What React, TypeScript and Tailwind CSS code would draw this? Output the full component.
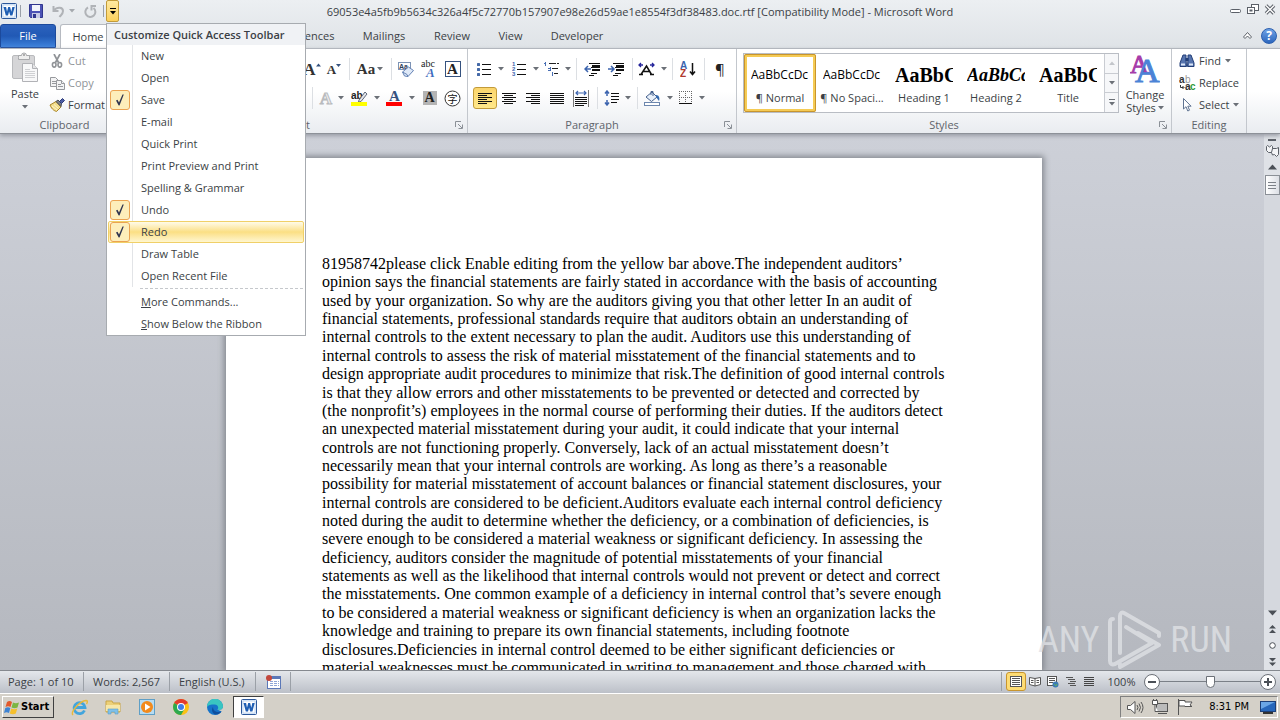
import type { ReactNode } from 'react';
import clsx from 'clsx';

type MenuEntry = {
  label: string;
  checked?: boolean;
  active?: boolean;
};

const menuEntries: MenuEntry[] = [
  { label: 'New' },
  { label: 'Open' },
  { label: 'Save', checked: true },
  { label: 'E-mail' },
  { label: 'Quick Print' },
  { label: 'Print Preview and Print' },
  { label: 'Spelling & Grammar' },
  { label: 'Undo', checked: true },
  { label: 'Redo', checked: true, active: true },
  { label: 'Draw Table' },
  { label: 'Open Recent File' },
];

const tabs = [
  { label: 'References', width: 'ml-[148px] w-[84px]' },
  { label: 'Mailings', width: 'w-[72px]' },
  { label: 'Review', width: 'w-[64px]' },
  { label: 'View', width: 'w-[53px]' },
  { label: 'Developer', width: 'w-[80px]' },
];

const styleCards = [
  { name: '¶ Normal', sample: 'AaBbCcDc', sampleClass: 'text-[12px]', selected: true },
  { name: '¶ No Spaci...', sample: 'AaBbCcDc', sampleClass: 'text-[12px]' },
  { name: 'Heading 1', sample: 'AaBbC', sampleClass: 'font-["Liberation_Serif",serif] text-[20px] font-bold' },
  { name: 'Heading 2', sample: 'AaBbCc', sampleClass: 'font-["Liberation_Serif",serif] text-[18px] font-bold italic' },
  { name: 'Title', sample: 'AaBbC', sampleClass: 'font-["Liberation_Serif",serif] text-[20px] font-bold' },
];

const bodyLines = [
  '81958742please click Enable editing from the yellow bar above.The independent auditors’',
  'opinion says the financial statements are fairly stated in accordance with the basis of accounting',
  'used by your organization. So why are the auditors giving you that other letter In an audit of',
  'financial statements, professional standards require that auditors obtain an understanding of',
  'internal controls to the extent necessary to plan the audit. Auditors use this understanding of',
  'internal controls to assess the risk of material misstatement of the financial statements and to',
  'design appropriate audit procedures to minimize that risk.The definition of good internal controls',
  'is that they allow errors and other misstatements to be prevented or detected and corrected by',
  '(the nonprofit’s) employees in the normal course of performing their duties. If the auditors detect',
  'an unexpected material misstatement during your audit, it could indicate that your internal',
  'controls are not functioning properly. Conversely, lack of an actual misstatement doesn’t',
  'necessarily mean that your internal controls are working. As long as there’s a reasonable',
  'possibility for material misstatement of account balances or financial statement disclosures, your',
  'internal controls are considered to be deficient.Auditors evaluate each internal control deficiency',
  'noted during the audit to determine whether the deficiency, or a combination of deficiencies, is',
  'severe enough to be considered a material weakness or significant deficiency. In assessing the',
  'deficiency, auditors consider the magnitude of potential misstatements of your financial',
  'statements as well as the likelihood that internal controls would not prevent or detect and correct',
  'the misstatements. One common example of a deficiency in internal control that’s severe enough',
  'to be considered a material weakness or significant deficiency is when an organization lacks the',
  'knowledge and training to prepare its own financial statements, including footnote',
  'disclosures.Deficiencies in internal control deemed to be either significant deficiencies or',
  'material weaknesses must be communicated in writing to management and those charged with',
];

function Caret({ className = 'text-[#6b7077]' }: { className?: string }) {
  return (
    <svg width="6" height="4" viewBox="0 0 6 4" className={clsx('shrink-0', className)} aria-hidden="true">
      <path d="M0 0h6L3 3.5z" fill="currentColor" />
    </svg>
  );
}

function Sep() {
  return (
    <span className="flex w-2 shrink-0 justify-center">
      <span className="h-[22px] w-px bg-[#dcdfe3]" />
    </span>
  );
}

type ToolProps = {
  label: string;
  width: string;
  children: ReactNode;
  caret?: boolean;
  selected?: boolean;
};

function Tool({ label, width, children, caret, selected }: ToolProps) {
  return (
    <button
      type="button"
      aria-label={label}
      className={clsx(
        'flex h-[22px] shrink-0 items-center justify-center gap-[6px] rounded-[3px] border',
        width,
        selected ? 'border-[#c29b3a] bg-gradient-to-b from-[#fbd56c] to-[#ffe88b]' : 'border-transparent',
      )}
    >
      {children}
      {caret && <Caret />}
    </button>
  );
}

function Lines({ rows }: { rows: [number, number][] }) {
  return (
    <svg width="14" height="12" viewBox="0 0 14 12" shapeRendering="crispEdges" aria-hidden="true">
      {rows.map(([x, w], i) => (
        <rect key={i} x={x} y={i * 2 + 1} width={w} height="1" fill="#111" />
      ))}
    </svg>
  );
}

function WordIcon({ size }: { size: number }) {
  return (
    <svg width={size} height={size} viewBox="0 0 16 16" className="shrink-0" aria-hidden="true">
      <rect x=".5" y=".5" width="15" height="15" rx="1" fill="#e8f1fb" stroke="#2b579a" />
      <rect x="2" y="2" width="12" height="12" fill="#fff" stroke="#9dbfe8" strokeWidth=".6" />
      <path d="M2.500 4h2.600l.900 4.800L7.200 4h1.900l1.200 4.800L11.300 4h2.400l-2.300 8.500H9.200L8.100 8.400 7 12.500H4.800z" fill="#1f5fb4" />
    </svg>
  );
}

function PasteIcon() {
  return (
    <svg width="27" height="31" viewBox="0 0 27 31" aria-hidden="true">
      <rect x=".5" y="3.5" width="22" height="23" rx="1.5" fill="#d5d5d7" stroke="#b9babd" />
      <path d="M6.500 5.500V3.500h3a2.500 2.500 0 0 1 5 0h3v4h-11z" fill="#eee" stroke="#a7a8ab" />
      <circle cx="12" cy="3" r="1" fill="#999" />
      <path d="M10.500 11.500h10l5 5v13h-15z" fill="#f8f8f9" stroke="#b1b2b6" />
      <path d="M20.500 11.500v5h5" fill="#e4e4e6" stroke="#b1b2b6" />
      <path d="M13 17.500h5M13 19.500h10M13 21.500h10M13 23.500h10M13 25.500h10" stroke="#cfd0d3" />
    </svg>
  );
}

function CutIcon() {
  return (
    <svg width="16" height="14" viewBox="0 0 16 14" fill="none" stroke="#909397" aria-hidden="true">
      <path d="M5 0l4.500 8.500M11 0L6.500 8.500" strokeWidth="1.700" />
      <ellipse cx="5.200" cy="10.800" rx="1.800" ry="2.300" strokeWidth="1.600" />
      <ellipse cx="10.800" cy="10.800" rx="1.800" ry="2.300" strokeWidth="1.600" />
    </svg>
  );
}

function CopyIcon() {
  return (
    <svg width="16" height="14" viewBox="0 0 16 14" fill="#f3f3f4" stroke="#97999d" aria-hidden="true">
      <path d="M1.500 1.500h5l3 3v6h-8z" />
      <path d="M3 5.500h4M3 7.500h4" />
      <path d="M7.500 4.500h5l3 3v6h-8z" />
      <path d="M12.500 4.500v3h3M9 8.500h3M9 10.500h5" />
    </svg>
  );
}

function PainterIcon() {
  return (
    <svg width="16" height="14" viewBox="0 0 16 14" aria-hidden="true">
      <path d="M1 7l6-3.500L12 9l-4.500 4.500C6 13 3 12 1 7z" fill="#f1dc8a" stroke="#a98428" />
      <path d="M3 8l5 4M5 6.500l4.500 4" stroke="#fff6cf" />
      <path d="M7 3.500l2-1.500 3.500 3.500L12 8.500z" fill="#7e8086" stroke="#4c4f56" />
      <path d="M10.500 3.500L13.500.500l2 2-3 3z" fill="#4d5da4" stroke="#2c3a78" />
    </svg>
  );
}

function SerifA({ className, children = 'A' }: { className: string; children?: ReactNode }) {
  return <span className={clsx('font-["Liberation_Serif",serif] leading-none font-bold', className)}>{children}</span>;
}

function GrowIcon({ down }: { down?: boolean }) {
  return (
    <span className="flex items-center">
      <SerifA className={down ? 'text-[13px] text-[#333]' : 'text-[17px] text-[#333]'} />
      <svg width="5" height="12" viewBox="0 0 5 12" aria-hidden="true">
        <path d={down ? 'M0 1h5L2.500 4z' : 'M0 3.500h5L2.500.500z'} fill="#35527f" />
      </svg>
    </span>
  );
}

function EraserIcon() {
  return (
    <svg width="17" height="17" viewBox="0 0 17 17" aria-hidden="true">
      <rect x=".5" y="1.500" width="12" height="7" fill="#fff" stroke="#7d93b5" />
      <text x="1" y="8" fontSize="7" fontWeight="bold" fontFamily="Liberation Sans, sans-serif" fill="#30405c">Aa</text>
      <path d="M4.500 11l6-5 5 3.500-5.500 6-3.500-.500z" fill="#dfe9f7" stroke="#6583b5" />
      <path d="M4.500 11l4.500 2.500 1 2" fill="none" stroke="#6583b5" />
    </svg>
  );
}

function PhoneticIcon() {
  return (
    <svg width="17" height="18" viewBox="0 0 17 18" aria-hidden="true">
      <text x="0" y="7" fontSize="10" fontFamily="Liberation Serif, serif" fill="#222">abc</text>
      <text x="5" y="17" fontSize="13" fontWeight="bold" fontStyle="italic" fontFamily="Liberation Serif, serif" fill="#3f6dc0">A</text>
    </svg>
  );
}

function HighlightIcon() {
  return (
    <svg width="17" height="17" viewBox="0 0 17 17" aria-hidden="true">
      <text x="0" y="9" fontSize="10" fontWeight="bold" fontFamily="Liberation Sans, sans-serif" fill="#222">ab</text>
      <path d="M8 10l6-8 2 2-6 7.500-2.500.500z" fill="#e3e6ec" stroke="#5f6878" />
      <rect x="0" y="12" width="16" height="4" fill="#ff0" />
    </svg>
  );
}

function FontColorIcon() {
  return (
    <svg width="17" height="17" viewBox="0 0 17 17" aria-hidden="true">
      <text x="3" y="11" fontSize="15" fontWeight="bold" fontFamily="Liberation Serif, serif" fill="#35527f">A</text>
      <rect x="0" y="12" width="16" height="4" fill="#f00" />
    </svg>
  );
}

function CircledIcon() {
  return (
    <svg width="17" height="17" viewBox="0 0 17 17" aria-hidden="true">
      <circle cx="8.500" cy="8.500" r="7.500" fill="#fff" stroke="#333" />
      <text x="3.500" y="12.500" fontSize="10" fontFamily="Noto Sans CJK SC, sans-serif" fill="#111">字</text>
    </svg>
  );
}

function ListIcon({ kind }: { kind: 'bullet' | 'number' }) {
  return (
    <svg width="15" height="14" viewBox="0 0 15 14" aria-hidden="true">
      {[2, 7, 12].map((y, i) => (
        <g key={y}>
          {kind === 'bullet' ? (
            <rect x="0" y={y - 1} width="3" height="3" rx=".5" fill="#456aa8" />
          ) : (
            <text x="0" y={y + 2} fontSize="6" fontWeight="bold" fontFamily="Liberation Sans, sans-serif" fill="#3c64ae">
              {i + 1}
            </text>
          )}
          <rect x="5" y={y} width="9" height="1" fill="#111" shapeRendering="crispEdges" />
        </g>
      ))}
    </svg>
  );
}

function MultilevelIcon() {
  return (
    <svg width="16" height="15" viewBox="0 0 16 15" shapeRendering="crispEdges" aria-hidden="true">
      <path d="M5 1.500h11M8 6.500h7M11 11.500h4" stroke="#111" strokeDasharray="8 1" />
      <path d="M1.500 0v4M.500 1h1M4 6.500h3M6.500 5v4M4 8.500h3M9.500 10v4" stroke="#3c64ae" />
    </svg>
  );
}

function IndentIcon({ out }: { out?: boolean }) {
  return (
    <svg width="16" height="13" viewBox="0 0 16 13" aria-hidden="true">
      <path d="M5 .500h11M7 4.500h9M7 10.500h6M5 12.500h5" stroke="#111" shapeRendering="crispEdges" />
      <path d="M8 2h8v2H8zM8 6h8v2H8z" fill="#111" />
      <path d={out ? 'M4 3L1 6l3 3M1 6h6' : 'M3 3l3 3-3 3M0 6h6'} fill="none" stroke="#3c64ae" strokeWidth="1.500" />
    </svg>
  );
}

function AsianLayoutIcon() {
  return (
    <svg width="17" height="14" viewBox="0 0 17 14" fill="none" aria-hidden="true">
      <path d="M1 12.500h4M12 12.500h4M3 12.500L8.500 4l5 8.500M5.500 9.500h6" stroke="#111" strokeWidth="1.500" />
      <path d="M5 3H1M3 1L1 3l2 2M12 3h4M14 1l2 2-2 2" stroke="#24249b" strokeWidth="1.300" />
    </svg>
  );
}

function SortIcon() {
  return (
    <svg width="16" height="17" viewBox="0 0 16 17" aria-hidden="true">
      <text x="0" y="8" fontSize="10" fontWeight="bold" fontFamily="Liberation Sans, sans-serif" fill="#3c64ae">A</text>
      <text x="0" y="16" fontSize="10" fontWeight="bold" fontFamily="Liberation Sans, sans-serif" fill="#b0392e">Z</text>
      <path d="M12.500 2v11M10 10.500l2.500 3 2.500-3" fill="none" stroke="#111" strokeWidth="1.500" />
    </svg>
  );
}

function DistributeIcon() {
  return (
    <svg width="16" height="17" viewBox="0 0 16 17" aria-hidden="true">
      <path d="M.500 0v17M15.500 0v17" stroke="#777" />
      <path d="M3 3h10M5 1L3 3l2 2M11 1l2 2-2 2" stroke="#3c64ae" fill="none" strokeWidth="1.200" />
      <path d="M2 7.500h12M2 9.500h12M2 11.500h12M2 13.500h12M2 15.500h9" stroke="#111" shapeRendering="crispEdges" />
    </svg>
  );
}

function SpacingIcon() {
  return (
    <svg width="15" height="16" viewBox="0 0 15 16" aria-hidden="true">
      <path d="M3 1v5M1 3.500L3 1l2 2.500M3 15v-5M1 12.500L3 15l2-2.500" fill="none" stroke="#3c64ae" strokeWidth="1.500" />
      <path d="M7 3.500h8M7 6.500h8M7 9.500h8M7 12.500h6" stroke="#111" shapeRendering="crispEdges" />
    </svg>
  );
}

function FillIcon() {
  return (
    <svg width="17" height="16" viewBox="0 0 17 16" aria-hidden="true">
      <path d="M2 7l6-5 5 5-5.500 4.500z" fill="#e8f0fa" stroke="#45608d" />
      <path d="M7 5V1.500h2V6" fill="none" stroke="#45608d" />
      <path d="M12 5c3 0 4 3 3 6-1-1-2-3-3-4z" fill="#3268ae" />
      <rect x=".5" y="12.500" width="15" height="3" fill="#fff" stroke="#6d87ae" />
    </svg>
  );
}

function BordersIcon() {
  return (
    <svg width="14" height="14" viewBox="0 0 14 14" shapeRendering="crispEdges" aria-hidden="true">
      <path d="M.500 0v13M6.500 0v13M12.500 0v13M0 .500h13M0 6.500h13" stroke="#666" strokeDasharray="1 1" />
      <path d="M0 12.500h13" stroke="#111" />
    </svg>
  );
}

function BinocularsIcon() {
  return (
    <svg width="16" height="14" viewBox="0 0 16 14" aria-hidden="true">
      <path d="M4 1h3v4l.500 7.500h-6.500V9zM12 1H9v4l-.500 7.500H15V9z" fill="#5674ae" stroke="#233f78" />
      <rect x="6.500" y="4" width="3" height="3" fill="#233f78" />
      <path d="M2 10.500h4M10 10.500h4" stroke="#dbe6f7" strokeWidth="2" />
    </svg>
  );
}

function ReplaceIcon() {
  return (
    <svg width="17" height="16" viewBox="0 0 17 16" aria-hidden="true">
      <text x="0" y="8" fontSize="10" fontWeight="bold" fontFamily="Liberation Sans, sans-serif" fill="#333">a</text>
      <text x="6" y="8" fontSize="10" fontFamily="Liberation Sans, sans-serif" fill="#999">b</text>
      <path d="M1.500 10v2.500h3M3.500 11l1.500 1.500L3.500 14" fill="none" stroke="#333" />
      <text x="6" y="15" fontSize="10" fontWeight="bold" fontFamily="Liberation Sans, sans-serif" fill="#333">a</text>
      <text x="11" y="15" fontSize="10" fontWeight="bold" fontFamily="Liberation Sans, sans-serif" fill="#2f9a3a">c</text>
    </svg>
  );
}

function PointerIcon() {
  return (
    <svg width="16" height="14" viewBox="0 0 16 14" aria-hidden="true">
      <path d="M4.500.500v10.500l2.500-2.300 1.800 4.300 1.700-.800-1.700-4h3.300z" fill="#fff" stroke="#5f7391" />
    </svg>
  );
}

function ChangeStylesIcon() {
  return (
    <svg width="30" height="30" viewBox="0 0 30 30" aria-hidden="true">
      <text x="0" y="20" fontSize="26" fontFamily="Liberation Serif, serif" fill="#a73ca9" stroke="#a73ca9">A</text>
      <text x="5" y="29" fontSize="34" fontFamily="Liberation Serif, serif" fill="#4b83d6" stroke="#4b83d6">A</text>
    </svg>
  );
}

function Launcher() {
  return (
    <svg width="8" height="8" viewBox="0 0 8 8" fill="none" stroke="#8b9097" aria-hidden="true">
      <path d="M.500 6V.500H6M3 3l4 4M7.500 3.500v4h-4" />
    </svg>
  );
}

function Group({ title, width, launcher, children }: { title: string; width: string; launcher?: boolean; children: ReactNode }) {
  return (
    <section className={clsx('flex shrink-0 flex-col border-r border-[#c3c7cd]', width)}>
      <div className="min-h-0 flex-1">{children}</div>
      <div className="flex h-4 shrink-0 items-center text-[#5f646b]">
        <span className="flex-1 text-center">{title}</span>
        {launcher && (
          <button type="button" aria-label={`${title} settings`} className="mr-1 ml-2">
            <Launcher />
          </button>
        )}
      </div>
    </section>
  );
}

function TitleBar() {
  return (
    <header className="flex h-6 items-center">
      <div className="flex w-[125px] items-center self-start pl-px">
        <WordIcon size={16} />
        <span className="mr-px ml-[3px] h-3 w-px bg-[#9aa0a8]" />
        <button type="button" aria-label="Save" className="flex h-[22px] w-[28px] items-center justify-center">
          <svg width="14" height="14" viewBox="0 0 14 14" aria-hidden="true">
            <path d="M.500.500h13v13h-12l-1-1z" fill="#4b52b5" stroke="#30368e" />
            <rect x="3" y="1" width="8" height="6" fill="#f2f4fb" />
            <rect x="3" y="9" width="8" height="5" fill="#c6cae6" />
            <rect x="4" y="10" width="3" height="4" fill="#30368e" />
          </svg>
        </button>
        <button type="button" aria-label="Undo" className="flex h-[22px] w-[30px] items-center gap-1 pl-[2px]">
          <svg width="13" height="13" viewBox="0 0 13 13" fill="none" stroke="#b0b3b7" strokeWidth="2" aria-hidden="true">
            <path d="M1.500 1v5h5M2 5.500C5 1.500 11 2 11 6c0 3-2 4-3.500 6" />
          </svg>
          <Caret className="text-[#a5a9ae]" />
        </button>
        <button type="button" aria-label="Redo" className="flex h-[22px] w-[21px] items-center justify-center">
          <svg width="13" height="13" viewBox="0 0 13 13" fill="none" stroke="#b0b3b7" strokeWidth="2" aria-hidden="true">
            <path d="M4 2.500a5 5 0 1 0 5.500.500M12 1H7.500v4.500" />
          </svg>
        </button>
        <span className="mx-[2px] h-3 w-px bg-[#9aa0a8]" />
        <button
          type="button"
          aria-label="Customize Quick Access Toolbar"
          aria-expanded="true"
          className="flex h-[22px] w-[13px] flex-col items-center justify-center gap-[2px] rounded-[2px] border border-[#c29b3a] bg-gradient-to-b from-[#ffe9a0] to-[#fcd15b]"
        >
          <span className="h-px w-[6px] bg-black" />
          <Caret className="text-black" />
        </button>
      </div>
      <h1 className="flex-1 text-center text-[11px] text-[#3b3f45]">
        69053e4a5fb9b5634c326a4f5c72770b157907e98e26d59ae1e8554f3df38483.doc.rtf [Compatibility Mode] - Microsoft Word
      </h1>
      <div className="flex w-[125px] items-center justify-end gap-[5px] self-start pt-[3px] pr-1">
        <button type="button" aria-label="Minimize">
          <svg width="12" height="13" viewBox="0 0 12 13" aria-hidden="true">
            <rect x=".5" y="6.500" width="10" height="3" rx="1" fill="#fff" stroke="#5b6068" />
          </svg>
        </button>
        <button type="button" aria-label="Restore">
          <svg width="12" height="13" viewBox="0 0 12 13" fill="#fff" stroke="#5b6068" aria-hidden="true">
            <rect x="4.500" y="1.500" width="7" height="6" />
            <rect x=".5" y="4.500" width="7" height="6" />
            <rect x="3" y="7" width="2" height="1" />
          </svg>
        </button>
        <button type="button" aria-label="Close">
          <svg width="12" height="13" viewBox="0 0 12 13" aria-hidden="true">
            <path d="M2 2.500l8 8M10 2.500l-8 8" stroke="#5b6068" strokeWidth="3.500" />
            <path d="M2 2.500l8 8M10 2.500l-8 8" stroke="#fff" strokeWidth="1.500" />
          </svg>
        </button>
      </div>
    </header>
  );
}

function TabRow() {
  return (
    <nav className="flex h-6 items-stretch text-[#3b3f45]">
      <button
        type="button"
        className="w-[56px] rounded-t-[3px] border border-[#1c4a9c] bg-gradient-to-b from-[#2c62bd] via-[#2159b5] to-[#3f83dc] text-white"
      >
        File
      </button>
      <button type="button" className="ml-1 w-[56px] rounded-t-[3px] border border-b-0 border-[#b6bac1] bg-white">
        Home
      </button>
      {tabs.map((tab) => (
        <button key={tab.label} type="button" className={clsx('shrink-0', tab.width)}>
          {tab.label}
        </button>
      ))}
      <div className="ml-auto flex items-center gap-[9px] pr-[3px]">
        <button type="button" aria-label="Minimize the Ribbon">
          <svg width="9" height="8" viewBox="0 0 9 8" fill="#fff" stroke="#5b6068" aria-hidden="true">
            <path d="M.500 5l4-4.500 4 4.500-1.500 1.500-2.500-2.500L2 6.500z" />
          </svg>
        </button>
        <button
          type="button"
          aria-label="Help"
          className="h-4 w-4 rounded-full border border-[#2c5fae] bg-gradient-to-b from-[#6fa3e6] to-[#2c66bd] text-[12px] leading-none font-bold text-white"
        >
          ?
        </button>
      </div>
    </nav>
  );
}

function Ribbon() {
  return (
    <div className="z-10 flex h-[86px] border-t border-b border-[#b2b6bd] border-b-[#8d9198] bg-gradient-to-b from-white via-white to-[#e9ecf0] shadow-[0_2px_4px_#9a9ea6]">
      <Group title="Clipboard" width="w-[150px]" launcher>
        <div className="flex pt-[3px] pl-[6px]">
          <button type="button" className="flex w-[38px] flex-col items-center">
            <PasteIcon />
            <span className="leading-[22px] text-[#3b3f45]">Paste</span>
            <Caret />
          </button>
          <ul className="ml-[5px] whitespace-nowrap text-[#909498]">
            <li>
              <button type="button" className="flex h-[22px] items-center gap-[3px] pb-1">
                <CutIcon /> Cut
              </button>
            </li>
            <li>
              <button type="button" className="flex h-[22px] items-center gap-[3px] pb-1">
                <CopyIcon /> Copy
              </button>
            </li>
            <li>
              <button type="button" aria-label="Format Painter" className="flex h-[22px] items-center gap-[3px] pb-1 text-[#3b3f45]">
                <PainterIcon /> Format
              </button>
            </li>
          </ul>
        </div>
      </Group>

      <Group title="Font" width="w-[318px]" launcher>
        <div className="flex flex-col items-end gap-[7px] pt-[9px] pr-[3px]">
          <div className="flex items-center">
            <Tool label="Grow Font" width="w-[22px]"><GrowIcon /></Tool>
            <Tool label="Shrink Font" width="w-[22px]"><GrowIcon down /></Tool>
            <Sep />
            <Tool label="Change Case" width="w-[34px]" caret>
              <SerifA className="-mr-1 text-[15px] text-[#333]">Aa</SerifA>
            </Tool>
            <Sep />
            <Tool label="Clear Formatting" width="w-[23px]"><EraserIcon /></Tool>
            <Tool label="Phonetic Guide" width="w-[23px]"><PhoneticIcon /></Tool>
            <Tool label="Character Border" width="w-[23px]">
              <SerifA className="h-4 w-4 border border-[#35527f] text-[15px] text-[#222]" />
            </Tool>
          </div>
          <div className="flex items-center">
            <Sep />
            <Tool label="Text Effects" width="w-[32px]" caret>
              <SerifA className="text-[17px] text-[#eceded] [-webkit-text-stroke:1px_#b9bbbe]" />
            </Tool>
            <Tool label="Highlight" width="w-[35px]" caret><HighlightIcon /></Tool>
            <Tool label="Font Color" width="w-[35px]" caret><FontColorIcon /></Tool>
            <Tool label="Character Shading" width="w-[23px]">
              <SerifA className="h-[14px] w-[14px] bg-[#b4b4b4] text-[14px] text-[#222]" />
            </Tool>
            <Tool label="Enclose Characters" width="w-[23px]"><CircledIcon /></Tool>
          </div>
        </div>
      </Group>

      <Group title="Paragraph" width="w-[269px]" launcher>
        <div className="flex flex-col gap-[7px] pt-[9px] pl-[5px]">
          <div className="flex items-center">
            <Tool label="Bullets" width="w-[35px]" caret><ListIcon kind="bullet" /></Tool>
            <Tool label="Numbering" width="w-[35px]" caret><ListIcon kind="number" /></Tool>
            <Tool label="Multilevel List" width="w-[29px]" caret><MultilevelIcon /></Tool>
            <Sep />
            <Tool label="Decrease Indent" width="w-[24px]"><IndentIcon out /></Tool>
            <Tool label="Increase Indent" width="w-[24px]"><IndentIcon /></Tool>
            <Sep />
            <Tool label="Asian Layout" width="w-[32px]" caret><AsianLayoutIcon /></Tool>
            <Sep />
            <Tool label="Sort" width="w-[24px]"><SortIcon /></Tool>
            <Sep />
            <Tool label="Show marks" width="w-[24px]">
              <span className="text-[15px] leading-none text-[#222]">¶</span>
            </Tool>
          </div>
          <div className="flex items-center">
            <Tool label="Align Left" width="w-[24px]" selected>
              <Lines rows={[[0, 14], [0, 9], [0, 14], [0, 9], [0, 14], [0, 9]]} />
            </Tool>
            <Tool label="Center" width="w-[24px]">
              <Lines rows={[[0, 14], [2, 9], [0, 14], [2, 9], [0, 14], [2, 9]]} />
            </Tool>
            <Tool label="Align Right" width="w-[24px]">
              <Lines rows={[[0, 14], [5, 9], [0, 14], [5, 9], [0, 14], [5, 9]]} />
            </Tool>
            <Tool label="Justify" width="w-[24px]">
              <Lines rows={[[0, 14], [0, 14], [0, 14], [0, 14], [0, 14], [0, 14]]} />
            </Tool>
            <Tool label="Distributed" width="w-[24px]"><DistributeIcon /></Tool>
            <Sep />
            <Tool label="Line Spacing" width="w-[32px]" caret><SpacingIcon /></Tool>
            <Sep />
            <Tool label="Shading" width="w-[34px]" caret><FillIcon /></Tool>
            <Tool label="Borders" width="w-[34px]" caret><BordersIcon /></Tool>
          </div>
        </div>
      </Group>

      <Group title="Styles" width="w-[435px]" launcher>
        <div className="flex pt-1 pl-[6px]">
          <div className="flex h-[60px] border border-[#b9bdc4] bg-white">
            {styleCards.map((card) => (
              <button
                key={card.name}
                type="button"
                className={clsx(
                  'flex w-[72px] flex-col items-center rounded-[2px] border-3 px-[4px]',
                  card.selected ? 'border-[#f5cb55] outline-1 -outline-offset-1 outline-[#c8952d]' : 'border-transparent',
                )}
              >
                <span className={clsx('h-[33px] w-full overflow-hidden text-left leading-[36px] whitespace-nowrap text-black', card.sampleClass)}>
                  {card.sample}
                </span>
                <span className="whitespace-nowrap text-[#3b3f45]">{card.name}</span>
              </button>
            ))}
            <div className="flex w-[14px] flex-col divide-y divide-[#c9ccd2] border-l border-[#c9ccd2] bg-[#f6f7f9]">
              <button type="button" aria-label="Row up" className="flex flex-1 items-center justify-center">
                <Caret className="rotate-180 text-[#c3c6cb]" />
              </button>
              <button type="button" aria-label="Row down" className="flex flex-1 items-center justify-center">
                <Caret />
              </button>
              <button type="button" aria-label="More styles" className="flex flex-1 flex-col items-center justify-center gap-[2px]">
                <span className="h-px w-[6px] bg-[#6b7077]" />
                <Caret />
              </button>
            </div>
          </div>
          <button type="button" className="ml-1 flex w-[44px] flex-col items-center leading-[13px] text-[#3b3f45]">
            <ChangeStylesIcon />
            <span className="pt-[5px]">Change</span>
            <span className="flex items-center gap-[2px]">
              Styles <Caret />
            </span>
          </button>
        </div>
      </Group>

      <Group title="Editing" width="w-[75px]">
        <ul className="pt-[3px] pl-[7px] text-[#3b3f45]">
          <li>
            <button type="button" className="flex h-[22px] items-center gap-1 pb-1">
              <BinocularsIcon /> Find <Caret />
            </button>
          </li>
          <li>
            <button type="button" className="flex h-[22px] items-center gap-[3px] pb-1">
              <ReplaceIcon /> Replace
            </button>
          </li>
          <li>
            <button type="button" className="flex h-[22px] items-center gap-1 pb-1">
              <PointerIcon /> Select <Caret />
            </button>
          </li>
        </ul>
      </Group>
    </div>
  );
}

function CustomizeMenu() {
  return (
    <div className="absolute top-[23px] left-[106px] z-20 w-[200px] border border-[#a7abb0] bg-white text-[#3b3f45]">
      <h2 className="h-[21px] bg-[#f0f2f5] pl-[7px] leading-[22px] font-semibold">Customize Quick Access Toolbar</h2>
      <ul className="bg-[linear-gradient(90deg,transparent_25px,#e2e4e7_25px,#e2e4e7_26px,transparent_26px)]">
        {menuEntries.map((entry) => (
          <li key={entry.label}>
            <button
              type="button"
              role="menuitemcheckbox"
              aria-checked={!!entry.checked}
              className={clsx(
                'mx-px flex h-[22px] w-[196px] items-center rounded-[2px] border text-left',
                entry.active
                  ? 'border-[#f0d068] bg-gradient-to-b from-[#fffbe8] via-[#fbdf83] to-[#fff6cf]'
                  : 'border-transparent',
              )}
            >
              <span
                className={clsx(
                  'ml-px mr-[11px] flex h-5 w-5 items-center justify-center rounded-[3px] border',
                  entry.checked ? 'border-[#eba352] bg-[#fdeebb]' : 'border-transparent',
                )}
              >
                {entry.checked && (
                  <svg width="8" height="12" viewBox="0 0 8 12" fill="#2e3450" aria-hidden="true">
                    <path d="M0 6.500l1.500-.700L3 8.500 6.500.500h1.300L3.500 11.500H2.700z" />
                  </svg>
                )}
              </span>
              {entry.label}
            </button>
          </li>
        ))}
      </ul>
      <div className="mt-px mr-[2px] mb-[2px] ml-[33px] border-t border-dashed border-[#c5c8cc]" />
      <button type="button" className="block h-[22px] w-full pl-[34px] text-left">
        <span className="underline">M</span>ore Commands...
      </button>
      <button type="button" className="block h-[22px] w-full pl-[34px] text-left">
        <span className="underline">S</span>how Below the Ribbon
      </button>
    </div>
  );
}

function ScrollBar() {
  return (
    <div className="flex w-4 shrink-0 flex-col items-center bg-[#dfe2e7] text-[#4b5057]">
      <div className="mt-[5px] h-[2px] w-2 bg-[#5b6068]" />
      <button type="button" aria-label="View Ruler" className="mt-[3px]">
        <svg width="13" height="13" viewBox="0 0 13 13" fill="#f4f5f7" stroke="#5b6068" aria-hidden="true">
          <path d="M.500 2.500l1-1 2 1.500 2-1.500 1 1v6h-4l-2-2z" />
          <path d="M6.500 4.500h4l2-1v7l-2 2-2-2-2 .500-1-2.500z" />
        </svg>
      </button>
      <button type="button" aria-label="Scroll up" className="mt-[7px]">
        <svg width="9" height="6" viewBox="0 0 9 6" aria-hidden="true"><path d="M0 5.500h9L4.500.500z" fill="currentColor" /></svg>
      </button>
      <div className="mt-[5px] flex h-5 w-[15px] flex-col items-center justify-center gap-[2px] border border-[#8b9097] bg-gradient-to-r from-white to-[#dcdfe5]">
        <span className="h-px w-2 bg-[#7c8188]" />
        <span className="h-px w-2 bg-[#7c8188]" />
        <span className="h-px w-2 bg-[#7c8188]" />
      </div>
      <div className="w-full flex-1 bg-[#d5d8de]" />
      <div className="flex flex-col items-center gap-[9px] pb-1">
        <button type="button" aria-label="Scroll down">
          <svg width="9" height="6" viewBox="0 0 9 6" aria-hidden="true"><path d="M0 .500h9L4.500 5.500z" fill="currentColor" /></svg>
        </button>
        <button type="button" aria-label="Previous page">
          <svg width="7" height="8" viewBox="0 0 7 8" aria-hidden="true"><path d="M0 3.500h7L3.500 0zM0 8h7L3.500 4.500z" fill="currentColor" /></svg>
        </button>
        <button type="button" aria-label="Select browse object">
          <svg width="7" height="7" viewBox="0 0 7 7" aria-hidden="true"><circle cx="3.500" cy="3.500" r="2.800" fill="#fff" stroke="currentColor" /></svg>
        </button>
        <button type="button" aria-label="Next page">
          <svg width="7" height="8" viewBox="0 0 7 8" aria-hidden="true"><path d="M0 0h7L3.500 3.500zM0 4.500h7L3.500 8z" fill="currentColor" /></svg>
        </button>
      </div>
    </div>
  );
}

function Watermark() {
  return (
    <div className="absolute right-[48px] bottom-0 flex items-center gap-[7px] font-['Roboto_Condensed','Liberation_Sans_Narrow',Roboto,sans-serif] text-[36px] leading-[60px] text-[#dfe1e5] opacity-80">
      <span>ANY</span>
      <svg width="57" height="60" viewBox="0 0 57 60" fill="none" stroke="#dfe1e5" strokeWidth="4" strokeLinejoin="round" strokeLinecap="round" aria-hidden="true">
        <path d="M7 9c-2 0-3 1-3 3v39c0 3 2 4 5 3l37-21L20 17" />
        <path d="M14 43V6c0-3 2-4 4-3l35 20v3" />
        <path d="M32 23l21 12-39 22v-3" />
      </svg>
      <span>RUN</span>
    </div>
  );
}

function StatusSep() {
  return <span className="h-[19px] w-px bg-[#9ba0a7]" />;
}

function StatusBar() {
  return (
    <footer className="flex h-[23px] shrink-0 items-center border-t border-[#85898f] bg-gradient-to-b from-[#e4e7eb] to-[#bcc0c8] pb-px text-[#3b3f45]">
      <span className="w-[83px] pl-2">Page: 1 of 10</span>
      <StatusSep />
      <span className="w-[85px] pl-[9px]">Words: 2,567</span>
      <StatusSep />
      <span className="w-[85px] pl-[9px]">English (U.S.)</span>
      <StatusSep />
      <button type="button" aria-label="Macro recording" className="flex w-[34px] justify-center">
        <svg width="15" height="14" viewBox="0 0 15 14" aria-hidden="true">
          <rect x="1.500" y="1.500" width="13" height="12" fill="#fff" stroke="#5b78b8" />
          <rect x="1" y="1" width="14" height="3" fill="#5b78b8" />
          <path d="M4 6.500h9M4 8.500h9M4 10.500h9" stroke="#8fa6d6" strokeDasharray="3 1" />
          <circle cx="3" cy="3" r="3" fill="#c2473c" />
        </svg>
      </button>
      <StatusSep />
      <div className="ml-auto flex items-center">
        <StatusSep />
        <button type="button" aria-label="Print Layout" className="ml-1 flex h-[19px] w-5 items-center justify-center rounded-[3px] border border-[#c8952d] bg-[#fddc74]">
          <svg width="12" height="11" viewBox="0 0 12 11" aria-hidden="true">
            <rect x=".5" y=".5" width="11" height="10" fill="#fff" stroke="#555" />
            <path d="M2 2.500h8M2 4.500h8M2 6.500h8M2 8.500h8" stroke="#555" />
          </svg>
        </button>
        <button type="button" aria-label="Full Screen Reading" className="flex w-[18px] justify-center">
          <svg width="12" height="11" viewBox="0 0 12 11" fill="#fff" stroke="#555" aria-hidden="true">
            <path d="M.500 1.500L6 2.500l5.500-1v7L6 10 .500 8.500zM6 2.500V10M2 4.500h2.500M2 6.500h2.500M7.500 4.500H10M7.500 6.500H10" />
          </svg>
        </button>
        <button type="button" aria-label="Web Layout" className="flex w-[18px] justify-center">
          <svg width="12" height="12" viewBox="0 0 12 12" aria-hidden="true">
            <rect x=".5" y=".5" width="9" height="9" fill="#fff" stroke="#555" />
            <path d="M2 2.500h6M2 4.500h6M2 6.500h4" stroke="#555" />
            <circle cx="8.500" cy="8.500" r="3" fill="#3c7ab4" />
            <path d="M7 8l2 2 1-2" stroke="#5fae66" fill="none" />
          </svg>
        </button>
        <button type="button" aria-label="Outline" className="flex w-[18px] justify-center">
          <svg width="10" height="10" viewBox="0 0 10 10" stroke="#555" aria-hidden="true">
            <path d="M0 .500h7M2 2.500h7M4 4.500h6M2 6.500h7M4 8.500h6" />
          </svg>
        </button>
        <button type="button" aria-label="Draft" className="flex w-[18px] justify-center">
          <svg width="10" height="10" viewBox="0 0 10 10" stroke="#444" aria-hidden="true">
            <path d="M0 .500h10M0 2.500h10M0 4.500h10M0 6.500h10M0 8.500h10" />
          </svg>
        </button>
        <span className="w-[46px] pl-px text-center">100%</span>
        <button type="button" aria-label="Zoom Out" className="flex h-4 w-4 items-center justify-center rounded-full border border-[#6b7077] bg-white">
          <span className="h-[2px] w-2 bg-[#4b5057]" />
        </button>
        <input
          type="range"
          aria-label="Zoom"
          min={0}
          max={200}
          defaultValue={100}
          className="h-4 w-[100px] appearance-none bg-[linear-gradient(#7b8087,#7b8087)] bg-[length:100%_1px] bg-center bg-no-repeat [&::-webkit-slider-thumb]:h-3 [&::-webkit-slider-thumb]:w-[9px] [&::-webkit-slider-thumb]:appearance-none [&::-webkit-slider-thumb]:rounded-b-[5px] [&::-webkit-slider-thumb]:border [&::-webkit-slider-thumb]:border-[#6b7077] [&::-webkit-slider-thumb]:bg-white"
        />
        <button type="button" aria-label="Zoom In" className="mr-1 flex h-4 w-4 items-center justify-center rounded-full border border-[#6b7077] bg-white text-[#4b5057]">
          <svg width="8" height="8" viewBox="0 0 8 8" stroke="currentColor" strokeWidth="2" aria-hidden="true">
            <path d="M0 4h8M4 0v8" />
          </svg>
        </button>
      </div>
    </footer>
  );
}

function TaskBar() {
  return (
    <div className="flex h-[27px] shrink-0 items-center border-t border-white bg-[#d4d0c8] pl-[2px] font-['DejaVu_Sans_Condensed','DejaVu_Sans',sans-serif] text-black">
      <button
        type="button"
        className="flex h-[22px] w-[52px] items-center gap-px border border-t-white border-r-[#404040] border-b-[#404040] border-l-white pl-px text-[11px] font-bold"
      >
        <svg width="16" height="15" viewBox="0 0 16 15" className="shrink-0" aria-hidden="true">
          <path d="M3 2c2-1.500 3.500-1 5 0L6.500 7c-1.500-1-3-1.300-5 0z" fill="#e2592b" />
          <path d="M9 2.500c2 1 3.500 1 6 0l-1.500 5c-2 1-4 1-6 0z" fill="#7cb642" />
          <path d="M1.300 8c2-1.300 3.500-1 5 0L5 13c-1.500-1-3-1.300-5 0z" fill="#3d83d3" />
          <path d="M7.300 8.500c2 1 4 1 6 0l-1.500 5c-2 1-4 .800-6 0z" fill="#f5bf2c" />
        </svg>
        Start
      </button>
      <ul className="ml-2 flex items-center">
        <li>
          <button type="button" aria-label="Internet Explorer" className="flex w-[34px] justify-center">
            <svg width="17" height="17" viewBox="0 0 17 17" fill="none" aria-hidden="true">
              <path d="M13.500 11.500A5.500 5.500 0 1 1 14 8.500H4" stroke="#42a5dd" strokeWidth="2.800" />
              <path d="M2 16C-1 13 9 2 15 1.500c2 0 1.500 2 .500 3.500" stroke="#e8b93b" strokeWidth="1.400" />
            </svg>
          </button>
        </li>
        <li>
          <button type="button" aria-label="Explorer" className="flex w-[34px] justify-center">
            <svg width="16" height="15" viewBox="0 0 16 15" aria-hidden="true">
              <path d="M1 1h6l1 2h7v9H1z" fill="#ecd078" stroke="#c9a546" />
              <rect x="1" y="5" width="14" height="6" fill="#f7e7a8" />
              <path d="M3 14V9h10v5h-3v-2H6v2z" fill="#7fc0e8" stroke="#5a9ecb" strokeWidth=".6" />
            </svg>
          </button>
        </li>
        <li>
          <button type="button" aria-label="Media Player" className="flex w-[34px] justify-center">
            <svg width="16" height="16" viewBox="0 0 16 16" aria-hidden="true">
              <rect x=".5" y=".5" width="15" height="15" fill="#b7dcf2" stroke="#5f9fc6" />
              <circle cx="8" cy="8" r="6" fill="#f28a1c" />
              <path d="M6 4.500l5.500 3.500L6 11.500z" fill="#fff" />
            </svg>
          </button>
        </li>
        <li>
          <button type="button" aria-label="Chrome" className="flex w-[34px] justify-center">
            <svg width="16" height="16" viewBox="0 0 16 16" aria-hidden="true">
              <circle cx="8" cy="8" r="8" fill="#fbc116" />
              <path d="M8 8L1.100 4a8 8 0 0 1 13.800 0z" fill="#e33b2e" />
              <path d="M8 8L1.100 4A8 8 0 0 0 8 16l3.500-6z" fill="#2da94f" />
              <circle cx="8" cy="8" r="4" fill="#fff" />
              <circle cx="8" cy="8" r="3" fill="#3f7de8" />
            </svg>
          </button>
        </li>
        <li>
          <button type="button" aria-label="Edge" className="flex w-[34px] justify-center">
            <svg width="16" height="16" viewBox="0 0 16 16" aria-hidden="true">
              <circle cx="8" cy="8" r="8" fill="#1673c9" />
              <path d="M0 8a8 8 0 0 1 16-.500c0 3-3 4-5.500 3 1.500-2 .500-5-3-5C4 5.500 1 6 0 8z" fill="#39c5c1" />
              <path d="M6 8c0 4 4 6 8.500 4.500-1 1.500-3 3-5.500 3-4-.500-5-5-3-7.500z" fill="#0f4f9e" />
              <path d="M10 10.500c3 1 5.500 0 6-2v4h-1z" fill="#d4d0c8" />
            </svg>
          </button>
        </li>
      </ul>
      <button
        type="button"
        aria-label="Word"
        className="ml-px flex h-[22px] w-[31px] items-center justify-center border border-t-[#404040] border-r-white border-b-white border-l-[#404040] bg-white"
      >
        <WordIcon size={16} />
      </button>
      <div className="mr-[2px] ml-auto flex h-[22px] items-center border border-t-[#808080] border-r-white border-b-white border-l-[#808080] pl-[6px]">
        <svg width="17" height="15" viewBox="0 0 17 15" fill="#fff" stroke="#555" aria-label="Volume">
          <path d="M.500 5.500h3L8 1.500v12L3.500 9.500h-3z" />
          <path d="M10 5q2 2.500 0 5M12 3.500q3 4 0 8M14 2q4 5.500 0 11" fill="none" />
        </svg>
        <svg width="17" height="16" viewBox="0 0 17 16" className="ml-2" fill="#fff" stroke="#555" aria-label="Network">
          <rect x="4.500" y="4.500" width="11" height="8" fill="#bbb" />
          <path d="M6 14.500h9M.500 1.500h5v4h-5zM3 5.500v7h3M1.500 0v2M4.500 0v2" />
        </svg>
        <svg width="17" height="16" viewBox="0 0 17 16" className="ml-2" fill="#fff" stroke="#555" aria-label="Action Center">
          <path d="M1.500 0v16M2 1.500h6v1.500h7l-2 3 2 1.500H8V7H2z" />
        </svg>
        <time className="mr-[11px] ml-[15px]">8:31 PM</time>
        <svg width="16" height="13" viewBox="0 0 16 13" className="mr-px" aria-hidden="true">
          <rect x=".5" y=".5" width="15" height="10" fill="#2767bb" stroke="#1c3f78" />
          <path d="M1 1h14L1 8z" fill="#6aa6e6" />
          <rect x="3" y="11" width="10" height="2" fill="#333" />
        </svg>
      </div>
    </div>
  );
}

export default function App() {
  return (
    <div className="relative flex h-screen flex-col overflow-hidden bg-gradient-to-b from-[#eceff2] to-[#dfe3e7] bg-[length:100%_48px] bg-no-repeat font-['Open_Sans','Noto_Sans',sans-serif] text-[11px] leading-[16px]">
      <TitleBar />
      <TabRow />
      <Ribbon />
      <CustomizeMenu />
      <main className="relative flex min-h-0 flex-1 bg-gradient-to-b from-[#cdd0d8] to-[#b5b8bf]">
        <div className="flex min-w-0 flex-1 justify-center overflow-hidden pt-6">
          <article className="mr-[-4px] flex w-[816px] flex-col bg-white px-24 pt-[97px] font-['Liberation_Serif',serif] text-[16px] leading-[18px] text-black shadow-[0_0_6px_2px_#83878e]">
            <div className="-mb-[7px] flex flex-1 flex-col justify-between">
              {bodyLines.map((line) => (
                <p key={line} className="whitespace-nowrap">
                  {line}
                </p>
              ))}
            </div>
          </article>
        </div>
        <ScrollBar />
        <Watermark />
      </main>
      <StatusBar />
      <TaskBar />
    </div>
  );
}
